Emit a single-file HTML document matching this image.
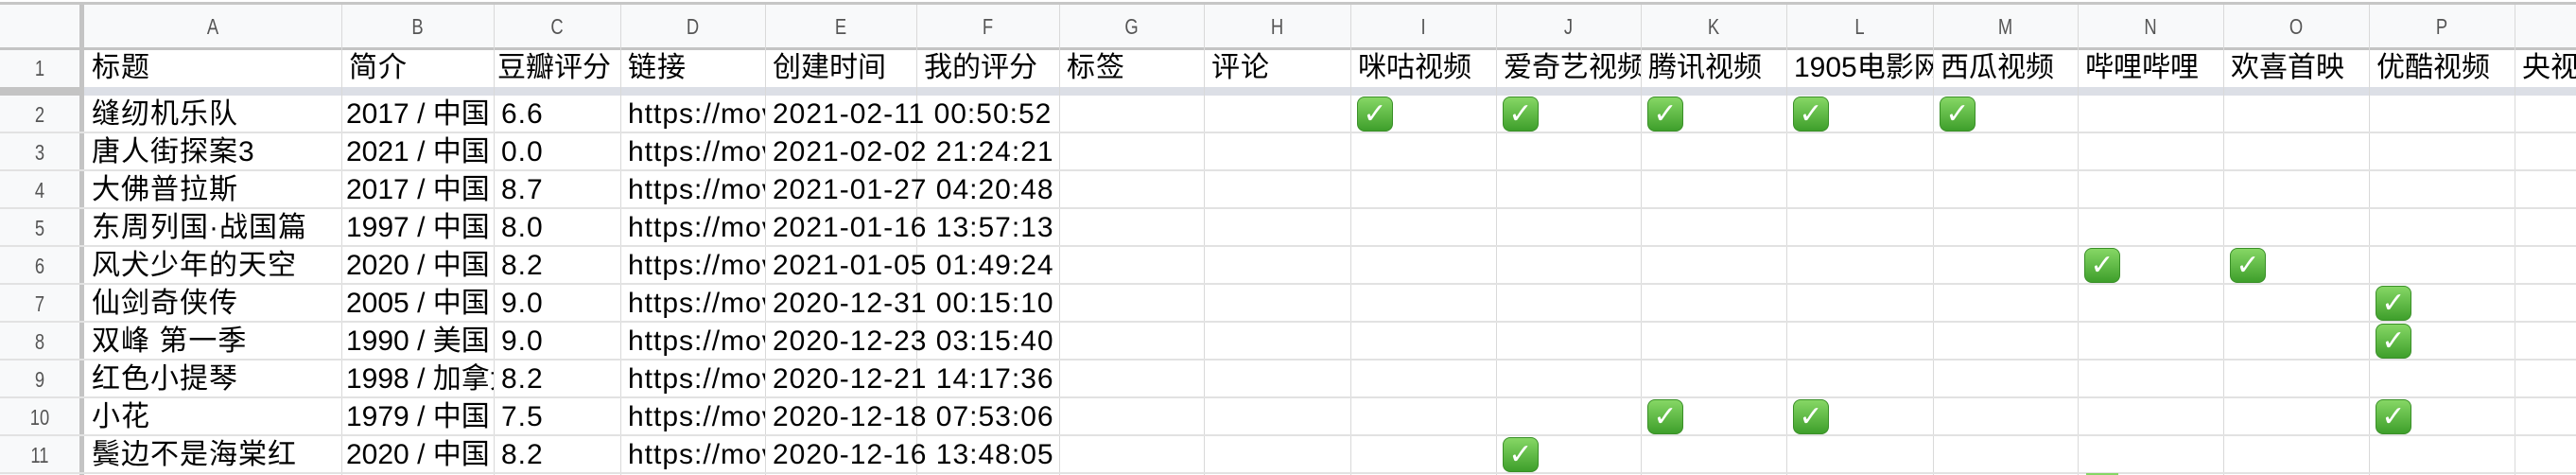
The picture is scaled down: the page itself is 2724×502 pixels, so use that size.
<!DOCTYPE html>
<html><head><meta charset="utf-8"><style>
html,body{margin:0;width:2724px;height:502px;overflow:hidden;background:#fff}
#w{position:relative;width:2724px;height:502px;overflow:hidden;font-family:"Liberation Sans","Noto Sans CJK SC",sans-serif;}
#w div{position:absolute;box-sizing:border-box}
.v{width:1px;top:5px;height:497px;background:#d9d9d9}
.h{left:0;width:2724px;height:2px;background:#e2e2e2}
.hd{top:5px;height:47px;background:#f8f9fa}
.cl{top:5px;height:47px;line-height:47px;text-align:center;color:#555;font-size:23px;transform:scaleX(.8)}
.rn{left:0;width:84px;text-align:center;color:#555;font-size:23px;line-height:40px;transform:scaleX(.8)}
.t{font-size:30px;line-height:40px;white-space:nowrap;overflow:hidden;color:#000;padding-left:8px;letter-spacing:1px}
.b{letter-spacing:0;padding-left:5px}
.ck{width:38px;height:37px;border-radius:8px;background:linear-gradient(#86d765,#3e9f2b);border:1px solid #3a8f28;color:#fff;font-size:30px;line-height:36px;text-align:center;font-weight:bold;font-family:"DejaVu Sans",sans-serif}
</style></head><body><div id="w">
<div style="left:0;top:0;width:2724px;height:5px;background:#fff;border-bottom:3px solid #c6c6c6"></div>
<div class="hd" style="left:0;width:2724px"></div>
<div style="left:0;top:5px;width:84px;height:497px;background:#f8f9fa"></div>
<div style="left:84px;top:5px;width:5px;height:497px;background:#c4c4c4"></div>
<div style="left:0;top:50px;width:2724px;height:3px;background:#c4c4c4"></div>
<div style="left:0;top:92px;width:2724px;height:9px;background:#dcdfe6"></div>
<div style="left:0;top:92px;width:89px;height:9px;background:#c4c4c4"></div>
<div class="v" style="left:361px"></div><div class="v" style="left:522px"></div><div class="v" style="left:656px"></div><div class="v" style="left:809px"></div><div class="v" style="left:969px"></div><div class="v" style="left:1120px"></div><div class="v" style="left:1273px"></div><div class="v" style="left:1428px"></div><div class="v" style="left:1582px"></div><div class="v" style="left:1735px"></div><div class="v" style="left:1889px"></div><div class="v" style="left:2044px"></div><div class="v" style="left:2197px"></div><div class="v" style="left:2351px"></div><div class="v" style="left:2505px"></div><div class="v" style="left:2659px"></div>
<div class="h" style="top:139px"></div><div class="h" style="top:179px"></div><div class="h" style="top:219px"></div><div class="h" style="top:259px"></div><div class="h" style="top:299px"></div><div class="h" style="top:339px"></div><div class="h" style="top:379px"></div><div class="h" style="top:419px"></div><div class="h" style="top:459px"></div><div class="h" style="top:499px"></div>
<div class="cl" style="left:89px;width:272px">A</div><div class="cl" style="left:361px;width:161px">B</div><div class="cl" style="left:522px;width:134px">C</div><div class="cl" style="left:656px;width:153px">D</div><div class="cl" style="left:809px;width:160px">E</div><div class="cl" style="left:969px;width:151px">F</div><div class="cl" style="left:1120px;width:153px">G</div><div class="cl" style="left:1273px;width:155px">H</div><div class="cl" style="left:1428px;width:154px">I</div><div class="cl" style="left:1582px;width:153px">J</div><div class="cl" style="left:1735px;width:154px">K</div><div class="cl" style="left:1889px;width:155px">L</div><div class="cl" style="left:2044px;width:153px">M</div><div class="cl" style="left:2197px;width:154px">N</div><div class="cl" style="left:2351px;width:154px">O</div><div class="cl" style="left:2505px;width:154px">P</div>
<div class="rn" style="top:52px">1</div><div class="rn" style="top:101px">2</div><div class="rn" style="top:141px">3</div><div class="rn" style="top:181px">4</div><div class="rn" style="top:221px">5</div><div class="rn" style="top:261px">6</div><div class="rn" style="top:301px">7</div><div class="rn" style="top:341px">8</div><div class="rn" style="top:381px">9</div><div class="rn" style="top:421px">10</div><div class="rn" style="top:461px">11</div>
<div class="t" style="top:52px;left:89px;width:272px">标题</div><div class="t" style="top:52px;left:361px;width:161px">简介</div><div class="t" style="top:52px;left:522px;width:134px;padding-left:4px;letter-spacing:0">豆瓣评分</div><div class="t" style="top:52px;left:656px;width:153px">链接</div><div class="t" style="top:52px;left:809px;width:160px;letter-spacing:0">创建时间</div><div class="t" style="top:52px;left:969px;width:151px;letter-spacing:0">我的评分</div><div class="t" style="top:52px;left:1120px;width:153px">标签</div><div class="t" style="top:52px;left:1273px;width:155px">评论</div><div class="t" style="top:52px;left:1428px;width:154px;letter-spacing:0">咪咕视频</div><div class="t" style="top:52px;left:1582px;width:153px;letter-spacing:0">爱奇艺视频</div><div class="t" style="top:52px;left:1735px;width:154px;letter-spacing:0">腾讯视频</div><div class="t" style="top:52px;left:1889px;width:155px;letter-spacing:0">1905电影网</div><div class="t" style="top:52px;left:2044px;width:153px;letter-spacing:0">西瓜视频</div><div class="t" style="top:52px;left:2197px;width:154px;letter-spacing:0">哔哩哔哩</div><div class="t" style="top:52px;left:2351px;width:154px;letter-spacing:0">欢喜首映</div><div class="t" style="top:52px;left:2505px;width:154px;letter-spacing:0">优酷视频</div><div class="t" style="top:52px;left:2659px;width:65px;letter-spacing:0">央视频</div>
<div class="t" style="top:101px;left:89px;width:272px">缝纫机乐队</div><div class="t b" style="top:101px;left:361px;width:161px">2017 / 中国</div><div class="t" style="top:101px;left:522px;width:134px">6.6</div><div class="t" style="top:101px;left:656px;width:153px">https://movie</div><div class="t" style="top:101px;left:809px;width:311px">2021-02-11 00:50:52</div>
<div class="t" style="top:141px;left:89px;width:272px">唐人街探案3</div><div class="t b" style="top:141px;left:361px;width:161px">2021 / 中国</div><div class="t" style="top:141px;left:522px;width:134px">0.0</div><div class="t" style="top:141px;left:656px;width:153px">https://movie</div><div class="t" style="top:141px;left:809px;width:311px">2021-02-02 21:24:21</div>
<div class="t" style="top:181px;left:89px;width:272px">大佛普拉斯</div><div class="t b" style="top:181px;left:361px;width:161px">2017 / 中国</div><div class="t" style="top:181px;left:522px;width:134px">8.7</div><div class="t" style="top:181px;left:656px;width:153px">https://movie</div><div class="t" style="top:181px;left:809px;width:311px">2021-01-27 04:20:48</div>
<div class="t" style="top:221px;left:89px;width:272px">东周列国·战国篇</div><div class="t b" style="top:221px;left:361px;width:161px">1997 / 中国</div><div class="t" style="top:221px;left:522px;width:134px">8.0</div><div class="t" style="top:221px;left:656px;width:153px">https://movie</div><div class="t" style="top:221px;left:809px;width:311px">2021-01-16 13:57:13</div>
<div class="t" style="top:261px;left:89px;width:272px">风犬少年的天空</div><div class="t b" style="top:261px;left:361px;width:161px">2020 / 中国</div><div class="t" style="top:261px;left:522px;width:134px">8.2</div><div class="t" style="top:261px;left:656px;width:153px">https://movie</div><div class="t" style="top:261px;left:809px;width:311px">2021-01-05 01:49:24</div>
<div class="t" style="top:301px;left:89px;width:272px">仙剑奇侠传</div><div class="t b" style="top:301px;left:361px;width:161px">2005 / 中国</div><div class="t" style="top:301px;left:522px;width:134px">9.0</div><div class="t" style="top:301px;left:656px;width:153px">https://movie</div><div class="t" style="top:301px;left:809px;width:311px">2020-12-31 00:15:10</div>
<div class="t" style="top:341px;left:89px;width:272px">双峰 第一季</div><div class="t b" style="top:341px;left:361px;width:161px">1990 / 美国</div><div class="t" style="top:341px;left:522px;width:134px">9.0</div><div class="t" style="top:341px;left:656px;width:153px">https://movie</div><div class="t" style="top:341px;left:809px;width:311px">2020-12-23 03:15:40</div>
<div class="t" style="top:381px;left:89px;width:272px">红色小提琴</div><div class="t b" style="top:381px;left:361px;width:161px">1998 / 加拿大</div><div class="t" style="top:381px;left:522px;width:134px">8.2</div><div class="t" style="top:381px;left:656px;width:153px">https://movie</div><div class="t" style="top:381px;left:809px;width:311px">2020-12-21 14:17:36</div>
<div class="t" style="top:421px;left:89px;width:272px">小花</div><div class="t b" style="top:421px;left:361px;width:161px">1979 / 中国</div><div class="t" style="top:421px;left:522px;width:134px">7.5</div><div class="t" style="top:421px;left:656px;width:153px">https://movie</div><div class="t" style="top:421px;left:809px;width:311px">2020-12-18 07:53:06</div>
<div class="t" style="top:461px;left:89px;width:272px">鬓边不是海棠红</div><div class="t b" style="top:461px;left:361px;width:161px">2020 / 中国</div><div class="t" style="top:461px;left:522px;width:134px">8.2</div><div class="t" style="top:461px;left:656px;width:153px">https://movie</div><div class="t" style="top:461px;left:809px;width:311px">2020-12-16 13:48:05</div>
<div class="ck" style="top:102px;left:1435px">✓</div><div class="ck" style="top:102px;left:1589px">✓</div><div class="ck" style="top:102px;left:1742px">✓</div><div class="ck" style="top:102px;left:1896px">✓</div><div class="ck" style="top:102px;left:2051px">✓</div>
<div class="ck" style="top:262px;left:2204px">✓</div><div class="ck" style="top:262px;left:2358px">✓</div>
<div class="ck" style="top:302px;left:2512px">✓</div><div class="ck" style="top:342px;left:2512px">✓</div>
<div class="ck" style="top:422px;left:1742px">✓</div><div class="ck" style="top:422px;left:1896px">✓</div><div class="ck" style="top:422px;left:2512px">✓</div>
<div class="ck" style="top:462px;left:1589px">✓</div>
<div style="top:500px;left:2206px;width:34px;height:2px;background:#86d765"></div>
</div></body></html>
